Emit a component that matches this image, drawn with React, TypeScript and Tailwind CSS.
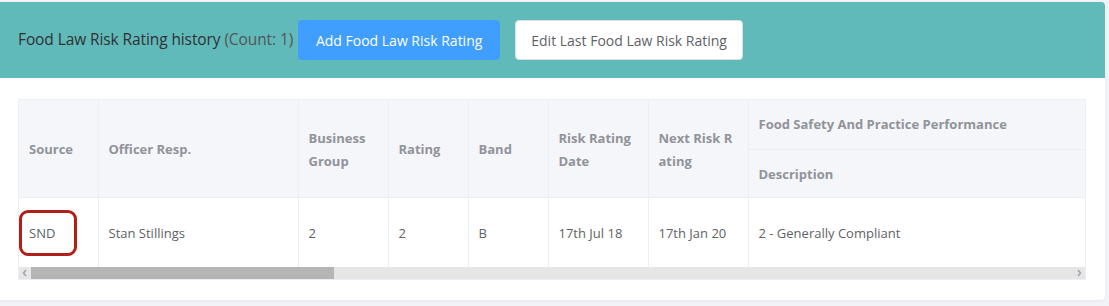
import React from 'react';

const cols = [
  { key: 'source', label: 'Source', width: 79 },
  { key: 'officer', label: 'Officer Resp.', width: 200 },
  { key: 'group', label: 'Business Group', width: 90 },
  { key: 'rating', label: 'Rating', width: 80 },
  { key: 'band', label: 'Band', width: 80 },
  { key: 'date', label: 'Risk Rating Date', width: 100 },
  { key: 'next', label: 'Next Risk Rating', width: 100 },
];

const row: Record<string, string> = {
  source: 'SND',
  officer: 'Stan Stillings',
  group: '2',
  rating: '2',
  band: 'B',
  date: '17th Jul 18',
  next: '17th Jan 20',
  description: '2 - Generally Compliant',
};

const font = { fontFamily: '"Open Sans", "Noto Sans", Arial, sans-serif' };

const Arrow = ({ dir }: { dir: 'left' | 'right' }) => (
  <svg width="12" height="12" viewBox="0 0 12 12" className="shrink-0">
    <path
      d={dir === 'left' ? 'M7 3 L4.5 6 L7 9' : 'M5 3 L7.5 6 L5 9'}
      fill="none"
      stroke="#a3a3a3"
      strokeWidth="1.5"
    />
  </svg>
);

export default function App() {
  return (
    <div className="w-[1109px] h-[306px] bg-[#f2f3f6] pt-[2px] overflow-hidden" style={font}>
      <div className="w-[1105px] h-[298px] bg-white rounded-r-[4px] shadow-[0_1px_3px_rgba(0,0,0,0.06)]">
        {/* header bar */}
        <div className="h-[76px] bg-[#61baba] rounded-tr-[4px] flex items-center pl-[18px] gap-[15px]">
          <div className="text-[15.5px] text-[#303133] tracking-[-0.1px]">
            Food Law Risk Rating history <span className="text-[#555]">(Count: 1)</span>
          </div>
          <button className="h-[40px] w-[202px] -ml-[10px] rounded-[4px] bg-[#409eff] text-white text-[14px]">
            Add Food Law Risk Rating
          </button>
          <button className="h-[40px] w-[228px] rounded-[4px] bg-white border border-[#dcdfe6] text-[#606266] text-[14px]">
            Edit Last Food Law Risk Rating
          </button>
        </div>

        {/* table */}
        <div className="pt-[21px] pl-[18px]">
          <div className="relative w-[1068px] border border-[#ebeef5] overflow-hidden">
            <table className="table-fixed border-collapse w-[1100px] text-[13px]">
              <colgroup>
                {cols.map((c) => (
                  <col key={c.key} style={{ width: c.width }} />
                ))}
                <col style={{ width: 371 }} />
              </colgroup>
              <thead>
                <tr className="h-[49px] bg-[#f5f6fa]">
                  {cols.map((c) => (
                    <th
                      key={c.key}
                      rowSpan={2}
                      className="border-r border-b border-[#ebeef5] text-left align-middle px-[10px] pt-[3px] font-bold text-[#909399] leading-[23px]"
                    >
                      {c.key === 'next' ? (
                        <>
                          Next Risk R
                          <br />
                          ating
                        </>
                      ) : (
                        c.label
                      )}
                    </th>
                  ))}
                  <th className="border-b border-[#ebeef5] text-left px-[10px] font-bold text-[#909399] whitespace-nowrap">
                    Food Safety And Practice Performance
                  </th>
                </tr>
                <tr className="h-[48px] bg-[#f5f6fa]">
                  <th className="border-b border-[#ebeef5] text-left px-[10px] pt-[3px] font-bold text-[#909399]">
                    Description
                  </th>
                </tr>
              </thead>
              <tbody>
                <tr className="h-[70px]">
                  {cols.map((c) => (
                    <td key={c.key} className="border-r border-[#ebeef5] px-[10px] pt-[3px] text-[#606266]">
                      {row[c.key]}
                    </td>
                  ))}
                  <td className="px-[10px] pt-[3px] text-[#606266] whitespace-nowrap">{row.description}</td>
                </tr>
              </tbody>
            </table>

            {/* horizontal scrollbar */}
            <div className="h-[12px] bg-[#e6e6e6] flex items-center">
              <Arrow dir="left" />
              <div className="h-[12px] w-[303px] bg-[#b5b5b5]" />
              <div className="flex-1" />
              <Arrow dir="right" />
            </div>

            {/* annotation around SND */}
            <div className="absolute left-0 top-[110px] w-[58px] h-[46px] border-[3px] border-[#b0201a] rounded-[9px]" />
          </div>
        </div>
      </div>
    </div>
  );
}
